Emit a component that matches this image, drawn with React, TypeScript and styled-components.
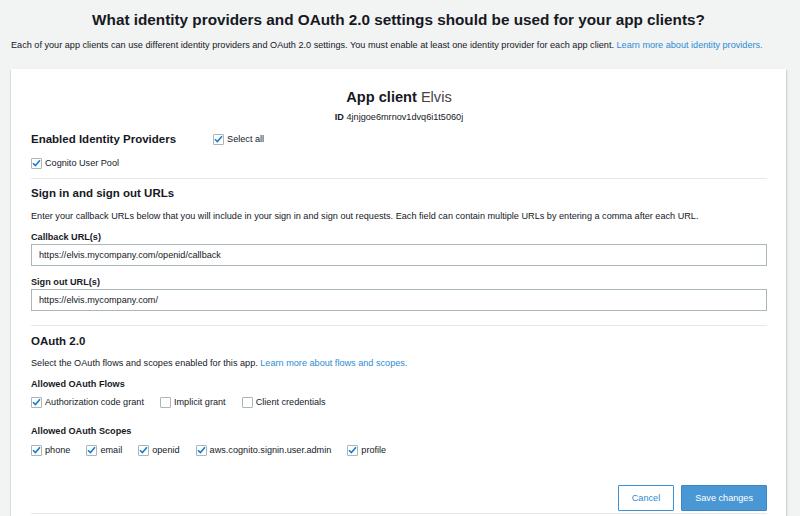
import React from 'react';
import styled, { createGlobalStyle } from 'styled-components';

const BODY = 9.15;

const GlobalStyle = createGlobalStyle`
  html, body {
    margin: 0;
    padding: 0;
    background: #f2f3f3;
    font-family: "Liberation Sans", Arial, Helvetica, sans-serif;
    color: #16191f;
  }
  * { box-sizing: border-box; }
`;

const Page = styled.div`
  padding: 9px 14px 0 11px;
  height: 516px;
  overflow: hidden;
`;

const Title = styled.h1`
  margin: 0;
  font-size: 15.3px;
  line-height: 22px;
  font-weight: 700;
  text-align: center;
`;

const Intro = styled.p`
  margin: 7px 0 0;
  font-size: ${BODY}px;
  line-height: 14px;
  white-space: nowrap;
`;

const Link = styled.a`
  color: #2d8cd6;
  text-decoration: none;
`;

const Card = styled.div`
  margin-top: 17px;
  background: #fff;
  padding: 18px 19px 0 20px;
  box-shadow: 0 1px 1px 0 rgba(0, 28, 36, 0.25), 1px 1px 2px 0 rgba(0, 28, 36, 0.15),
    -1px 1px 1px 0 rgba(0, 28, 36, 0.06);
  min-height: 460px;
`;

const ClientName = styled.div`
  text-align: center;
  font-size: 14.6px;
  line-height: 20px;
  font-weight: 700;

  span {
    font-weight: 400;
    color: #444;
  }
`;

const ClientId = styled.div`
  margin-top: 3px;
  text-align: center;
  font-size: ${BODY}px;
  line-height: 14px;

  b { font-weight: 700; }
`;

const Section = styled.section<{ $top: number }>`
  margin-top: ${p => p.$top}px;
`;

const Divider = styled.hr<{ $top: number }>`
  border: none;
  border-top: 1px solid #e6e9e9;
  margin: ${p => p.$top}px 0 0;
`;

const HeadingRow = styled.div`
  display: flex;
  align-items: center;
  gap: 37px;
`;

const Heading = styled.h2`
  margin: 0;
  font-size: 11.5px;
  line-height: 16px;
  font-weight: 700;
`;

const Text = styled.p<{ $top: number }>`
  margin: ${p => p.$top}px 0 0;
  font-size: ${BODY}px;
  line-height: 14px;
`;

const FieldLabel = styled.div<{ $top: number }>`
  margin-top: ${p => p.$top}px;
  font-size: ${BODY}px;
  line-height: 14px;
  font-weight: 700;
`;

const Input = styled.input`
  display: block;
  width: 100%;
  height: 22px;
  margin-top: 0;
  padding: 0 7px;
  border: 1px solid #aab7b8;
  border-radius: 0;
  background: #fff;
  font-family: inherit;
  font-size: ${BODY}px;
  color: #16191f;
  outline: none;
`;

const CheckRow = styled.div<{ $top: number }>`
  display: flex;
  align-items: center;
  gap: 16px;
  margin-top: ${p => p.$top}px;
`;

const CheckLabel = styled.label`
  display: inline-flex;
  align-items: center;
  gap: 3px;
  font-size: ${BODY}px;
  line-height: 14px;
  cursor: pointer;
  white-space: nowrap;
`;

const Box = styled.span`
  width: 11px;
  height: 11px;
  border: 1px solid #aab7b8;
  border-radius: 1px;
  background: #fff;
  display: inline-flex;
  align-items: center;
  justify-content: center;
  flex: none;
`;

const Footer = styled.div`
  display: flex;
  justify-content: flex-end;
  gap: 7px;
  margin-top: 28px;
`;

const Button = styled.button<{ $primary?: boolean }>`
  height: 26px;
  padding: 0 13px;
  font-family: inherit;
  font-size: ${BODY}px;
  border: 1px solid ${p => (p.$primary ? '#3b88c8' : '#3d8fd3')};
  background: ${p => (p.$primary ? '#4a97d5' : '#fff')};
  color: ${p => (p.$primary ? '#fff' : '#2d8cd6')};
  border-radius: 1px;
  cursor: pointer;
`;

const Checkbox: React.FC<{ label: string; checked?: boolean }> = ({ label, checked }) => (
  <CheckLabel>
    <Box>
      {checked && (
        <svg width="9" height="8" viewBox="0 0 9 8">
          <path d="M1 4.2 L3.4 6.6 L8 1.2" fill="none" stroke="#1b7bcf" strokeWidth="1.6" />
        </svg>
      )}
    </Box>
    {label}
  </CheckLabel>
);

const FLOWS = [
  { label: 'Authorization code grant', checked: true },
  { label: 'Implicit grant', checked: false },
  { label: 'Client credentials', checked: false },
];

const SCOPES = ['phone', 'email', 'openid', 'aws.cognito.signin.user.admin', 'profile'];

export default function App() {
  return (
    <>
      <GlobalStyle />
      <Page>
        <Title>What identity providers and OAuth 2.0 settings should be used for your app clients?</Title>
        <Intro>
          Each of your app clients can use different identity providers and OAuth 2.0 settings. You must
          enable at least one identity provider for each app client.{' '}
          <Link href="#">Learn more about identity providers.</Link>
        </Intro>
        <Card>
          <ClientName>
            App client <span>Elvis</span>
          </ClientName>
          <ClientId>
            <b>ID</b> 4jnjgoe6mrnov1dvq6i1t5060j
          </ClientId>

          <Section $top={7}>
            <HeadingRow>
              <Heading>Enabled Identity Providers</Heading>
              <Checkbox label="Select all" checked />
            </HeadingRow>
            <CheckRow $top={9}>
              <Checkbox label="Cognito User Pool" checked />
            </CheckRow>
          </Section>

          <Divider $top={8} />

          <Section $top={6}>
            <Heading>Sign in and sign out URLs</Heading>
            <Text $top={8}>
              Enter your callback URLs below that you will include in your sign in and sign out requests. Each
              field can contain multiple URLs by entering a comma after each URL.
            </Text>
            <FieldLabel $top={7}>Callback URL(s)</FieldLabel>
            <Input defaultValue="https://elvis.mycompany.com/openid/callback" />
            <FieldLabel $top={9}>Sign out URL(s)</FieldLabel>
            <Input defaultValue="https://elvis.mycompany.com/" />
          </Section>

          <Divider $top={14} />

          <Section $top={7}>
            <Heading>OAuth 2.0</Heading>
            <Text $top={7}>
              Select the OAuth flows and scopes enabled for this app.{' '}
              <Link href="#">Learn more about flows and scopes.</Link>
            </Text>
            <FieldLabel $top={7}>Allowed OAuth Flows</FieldLabel>
            <CheckRow $top={4}>
              {FLOWS.map(f => (
                <Checkbox key={f.label} label={f.label} checked={f.checked} />
              ))}
            </CheckRow>
            <FieldLabel $top={15}>Allowed OAuth Scopes</FieldLabel>
            <CheckRow $top={5}>
              {SCOPES.map(s => (
                <Checkbox key={s} label={s} checked />
              ))}
            </CheckRow>
          </Section>

          <Footer>
            <Button>Cancel</Button>
            <Button $primary>Save changes</Button>
          </Footer>
          <Divider $top={2} />
        </Card>
      </Page>
    </>
  );
}
